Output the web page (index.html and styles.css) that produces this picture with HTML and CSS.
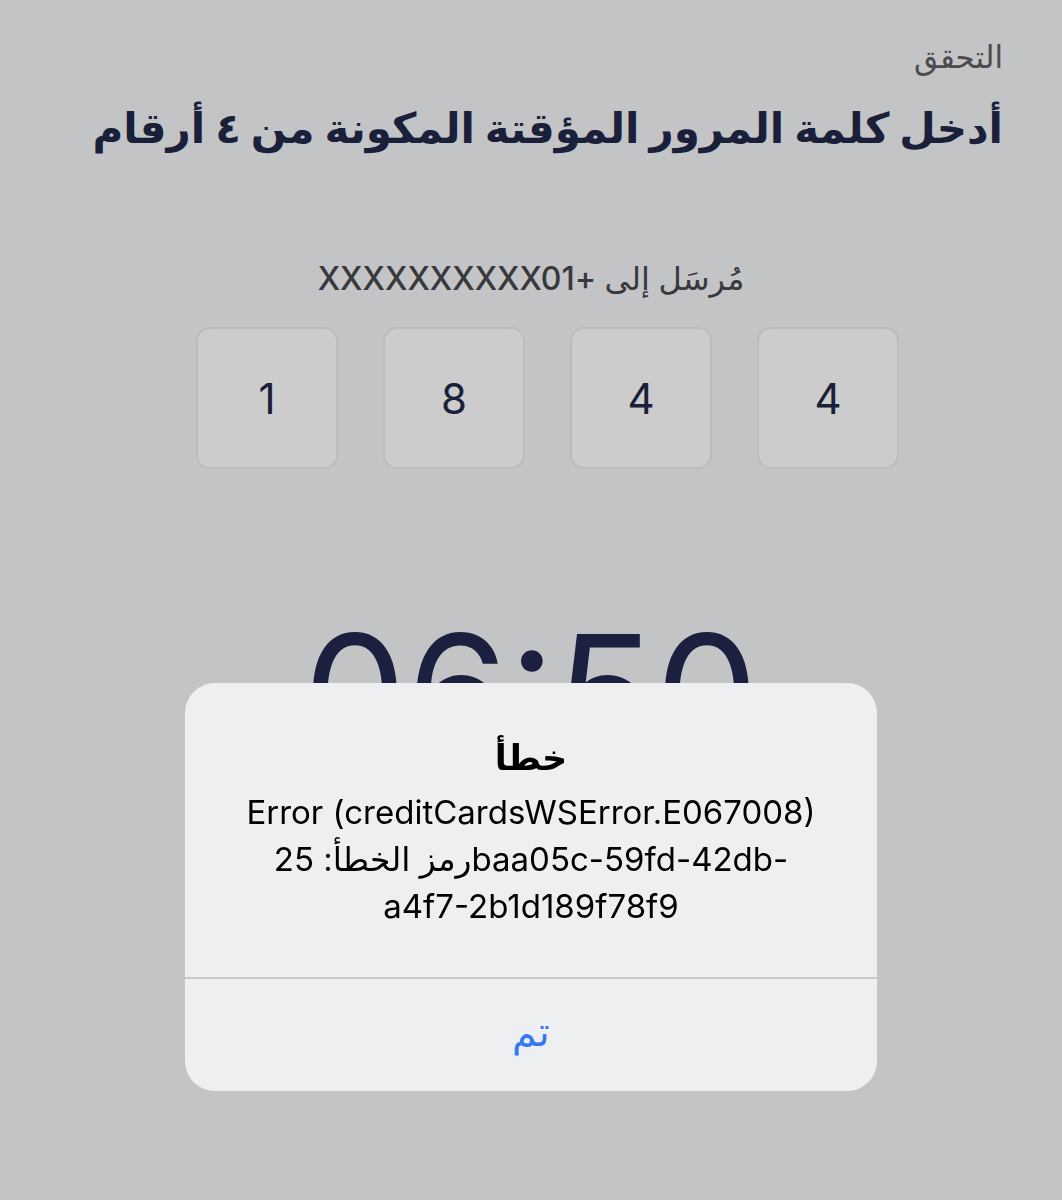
FILE: index.html
```html
<!DOCTYPE html>
<html lang="ar" dir="rtl">
<head>
  <meta charset="UTF-8">
  <meta name="viewport" content="width=device-width, initial-scale=1.0">
  <title>التحقق</title>
  <link rel="stylesheet" href="styles.css">
</head>
<body>

  <div class="otp-screen">
    <p class="eyebrow">التحقق</p>
    <h1 class="title">أدخل كلمة المرور المؤقتة المكونة من ٤ أرقام</h1>

    <p class="sent-to">مُرسَل إلى +XXXXXXXXXX01</p>

    <div class="code-row" dir="ltr">
      <div class="code-box">1</div>
      <div class="code-box">8</div>
      <div class="code-box">4</div>
      <div class="code-box">4</div>
    </div>

    <div class="timer" dir="ltr">06:50</div>
  </div>

  <!-- dimmed backdrop + system alert -->
  <div class="backdrop">
    <div class="alert">
      <div class="alert-body">
        <h2 class="alert-title">خطأ</h2>
        <p class="alert-message" dir="ltr">Error (creditCardsWSError.E067008)<br>رمز الخطأ: 25baa05c-59fd-42db-<br>a4f7-2b1d189f78f9</p>
      </div>
      <button class="alert-btn">تم</button>
    </div>
  </div>

</body>
</html>
```

FILE: styles.css
```css
* {
  margin: 0;
  padding: 0;
  box-sizing: border-box;
}

body {
  font-family: 'Inter', 'DejaVu Sans', sans-serif;
  background: #f3f5f8;
  height: 100vh;
  overflow: hidden;
}

.otp-screen {
  padding: 40px 59px 0 59px;
}

.eyebrow {
  font-size: 31px;
  line-height: 34px;
  color: #5e5e60;
}

.title {
  margin-top: 26px;
  font-size: 42px;
  line-height: 56px;
  font-weight: bold;
  color: #212849;
}

.sent-to {
  margin-top: 104px;
  font-size: 32px;
  line-height: 38px;
  font-weight: 500;
  text-align: center;
  color: #48484b;
}

.code-row {
  margin-top: 29px;
  display: flex;
  justify-content: center;
  gap: 45px;
  padding-left: 33px;
}

.code-box {
  width: 142px;
  height: 142px;
  background: #ffffff;
  border: 2px solid #ececee;
  border-radius: 14px;
  display: flex;
  align-items: center;
  justify-content: center;
  font-size: 42px;
  color: #212849;
}

.timer {
  margin-top: 143px;
  font-size: 164px;
  line-height: 1;
  font-weight: 400;
  text-align: center;
  color: #222950;
}

.backdrop {
  position: fixed;
  inset: 0;
  background: rgba(0, 0, 0, 0.2);
  display: flex;
  justify-content: center;
  padding-top: 683px;
}

.alert {
  width: 692px;
  height: 408px;
  background: #eeeff1;
  border-radius: 30px;
  display: flex;
  flex-direction: column;
  overflow: hidden;
}

.alert-body {
  padding: 52px 20px 0 20px;
  height: 296px;
  border-bottom: 2px solid #c9c9cb;
  text-align: center;
}

.alert-title {
  font-size: 35px;
  line-height: 44px;
  font-weight: bold;
  color: #000;
}

.alert-message {
  margin-top: 10px;
  font-size: 33px;
  line-height: 47px;
  color: #000;
}

.alert-btn {
  flex: 1;
  border: none;
  background: transparent;
  font-family: inherit;
  font-size: 40px;
  color: #3478f6;
  padding-bottom: 8px;
}
```
